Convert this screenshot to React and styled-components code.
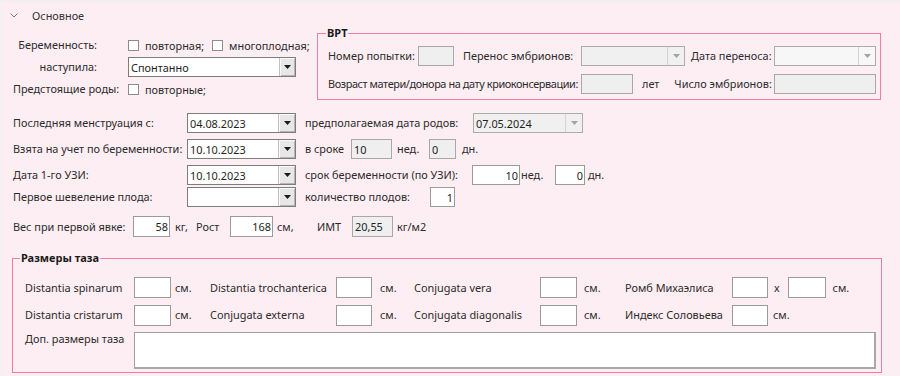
import React from "react";
import styled, { createGlobalStyle } from "styled-components";

const FONT = `"Noto Sans", "Open Sans", "DejaVu Sans", sans-serif`;

const GlobalStyle = createGlobalStyle`
  html, body { margin: 0; padding: 0; background: #fdeef3; }
  body { font-family: ${FONT}; font-size: 10.9px; color: #2b2b2b; }
  *, *::before, *::after { box-sizing: border-box; }
`;

const Page = styled.div`
  width: 900px;
  height: 376px;
  overflow: hidden;
  background: #fdeef3;
  border-top: 2px solid #f3eef0;
  border-left: 2px solid #f5f0f2;
`;

const Header = styled.div`
  height: 26px;
  display: flex;
  align-items: center;
  gap: 14px;
  padding-left: 8px;
  color: #333;
`;

const TopArea = styled.div`
  display: flex;
  align-items: flex-start;
`;

const PregnancyBlock = styled.div`
  width: 315px;
  padding: 6px 0 0 11px;
  display: flex;
  flex-direction: column;
`;

const Line = styled.div`
  display: flex;
  align-items: center;
  height: ${(p) => p.$h || 22}px;
  margin-top: ${(p) => p.$mt || 0}px;
`;

const Label = styled.span`
  flex: none;
  width: ${(p) => (p.$w ? `${p.$w}px` : "auto")};
  margin-left: ${(p) => p.$ml || 0}px;
  padding-left: ${(p) => p.$pl || 0}px;
  text-align: ${(p) => (p.$right ? "right" : "left")};
  align-self: ${(p) => (p.$top ? "start" : "auto")};
  letter-spacing: ${(p) => p.$ls || 0}px;
  white-space: nowrap;
  line-height: 14px;
`;

const CheckOption = styled.label`
  display: inline-flex;
  align-items: center;
  gap: 6px;
  margin-left: ${(p) => p.$ml || 0}px;
  white-space: nowrap;
`;

const CheckBox = styled.input.attrs({ type: "checkbox", readOnly: true })`
  appearance: none;
  margin: 0;
  width: 11px;
  height: 11px;
  flex: none;
  border: 1px solid #8c8c8c;
  background: #fff;
`;

const Dropdown = styled.div`
  flex: none;
  display: flex;
  width: ${(p) => p.$w}px;
  height: ${(p) => p.$h || 20}px;
  margin-left: ${(p) => p.$ml || 0}px;
  border: 1px solid ${(p) => (p.$disabled ? "#acacac" : "#7d7d7d")};
  background: ${(p) => (p.$disabled ? p.$bg || "#f0f0f0" : "#fff")};
`;

const DropValue = styled.span`
  flex: 1;
  display: flex;
  align-items: center;
  padding-left: 2px;
  color: #1f1f1f;
  white-space: nowrap;
  overflow: hidden;
`;

const DropButton = styled.span`
  flex: none;
  width: ${(p) => p.$w || 17}px;
  display: flex;
  align-items: center;
  justify-content: center;
  background: ${(p) => (p.$disabled ? "transparent" : "#e7e7e7")};
  border-left: 1px solid ${(p) => (p.$disabled ? "#d4d4d4" : "#c2c2c2")};
  box-shadow: ${(p) => (p.$disabled ? "none" : "inset 1px 1px 0 #fafafa, inset -1px -1px 0 #b5b5b5")};
`;

const Arrow = ({ color }) => (
  <svg width="7" height="4" viewBox="0 0 7 4">
    <path d="M0 0H7L3.5 4Z" fill={color} />
  </svg>
);

const Picker = ({ value, w = 109, h, ml, disabled, bg, btn }) => (
  <Dropdown $w={w} $h={h} $ml={ml} $disabled={disabled} $bg={bg}>
    <DropValue>{value}</DropValue>
    <DropButton $disabled={disabled} $w={btn}>
      <Arrow color={disabled ? "#a3a3a3" : "#1a1a1a"} />
    </DropButton>
  </Dropdown>
);

const TextBox = styled.input.attrs({ type: "text", readOnly: true })`
  flex: none;
  width: ${(p) => p.$w}px;
  height: ${(p) => p.$h || 20}px;
  margin: 0 0 0 ${(p) => p.$ml || 0}px;
  padding: 0 ${(p) => (p.$right ? 1 : 2)}px;
  border: 1px solid ${(p) => (p.$disabled ? "#a8a8a8" : "#9a9a9a")};
  background: ${(p) => (p.$disabled ? "#efefef" : "#fff")};
  font: inherit;
  color: #222;
  text-align: ${(p) => (p.$right ? "right" : "left")};
  outline: none;
`;

const Fieldset = styled.fieldset`
  margin: ${(p) => p.$margin || 0};
  padding: 0;
  min-width: 0;
  width: ${(p) => p.$w}px;
  border: 1px solid #f57ca7;
`;

const Legend = styled.legend`
  margin-left: ${(p) => p.$ml}px;
  padding: 0 1px;
  font-weight: 700;
  font-size: 11px;
  line-height: ${(p) => p.$lh}px;
  color: #1a1a1a;
`;

const ArtGrid = styled.div`
  display: grid;
  grid-template-columns: 90px 36px 127px 104px 89px 102px;
  grid-template-rows: 20px 20px;
  row-gap: 8px;
  align-items: center;
  padding: 8px 3px 5px 10px;
`;

const Cell = styled.div`
  display: flex;
  align-items: center;
  grid-column: ${(p) => p.$col || "auto"};
  padding-left: ${(p) => p.$pl || 0}px;
`;

const MainSection = styled.div`
  display: flex;
  flex-direction: column;
  padding: 13px 0 0 11px;
`;

const PelvisGrid = styled.div`
  display: grid;
  grid-template-columns: 109px 37px 39px 126px 36px 42px 126px 37px 48px 107px 36px 108px;
  grid-template-rows: 21px 21px 37px;
  row-gap: 6.5px;
  align-items: center;
  padding: 13px 4px 3px 12px;
`;

const Notes = styled.textarea.attrs({ readOnly: true })`
  grid-column: 2 / -1;
  height: 37px;
  margin: 0;
  resize: none;
  border: 1px solid #a0a0a0;
  border-right: 2px solid #a8a8a8;
  border-bottom: 2px solid #a8a8a8;
  background: #fff;
  font: inherit;
  outline: none;
`;

const Chevron = () => (
  <svg width="8" height="5" viewBox="0 0 8 5">
    <polyline points="0.5,0.5 4,4 7.5,0.5" fill="none" stroke="#777" strokeWidth="1" />
  </svg>
);

export default function App() {
  return (
    <>
      <GlobalStyle />
      <Page>
        <Header>
          <Chevron />
          <span>Основное</span>
        </Header>

        <TopArea>
          <PregnancyBlock>
            <Line>
              <Label $w={84} $right>Беременность:</Label>
              <CheckOption $ml={31}>
                <CheckBox />
                повторная;
              </CheckOption>
              <CheckOption $ml={8}>
                <CheckBox />
                многоплодная;
              </CheckOption>
            </Line>
            <Line>
              <Label $w={84} $right>наступила:</Label>
              <Picker value="Спонтанно" w={168} ml={31} btn={16} />
            </Line>
            <Line>
              <Label $w={115}>Предстоящие роды:</Label>
              <CheckOption>
                <CheckBox />
                повторные;
              </CheckOption>
            </Line>
          </PregnancyBlock>

          <Fieldset $w={564}>
            <Legend $ml={8} $lh={10}>ВРТ</Legend>
            <ArtGrid>
              <Label>Номер попытки:</Label>
              <TextBox $w={36} $disabled defaultValue="" />
              <Label $pl={9}>Перенос эмбрионов:</Label>
              <Picker w={104} disabled />
              <Label $pl={6}>Дата переноса:</Label>
              <Picker w={102} disabled bg="#f7f7f7" />

              <Cell $col="1 / 4">
                <Label $ls={-0.4}>Возраст матери/донора на дату криоконсервации:</Label>
              </Cell>
              <Cell $col="4 / 6">
                <TextBox $w={52} $disabled defaultValue="" />
                <Label $ml={9}>лет</Label>
                <Label $ml={15}>Число эмбрионов:</Label>
              </Cell>
              <TextBox $w={102} $disabled defaultValue="" />
            </ArtGrid>
          </Fieldset>
        </TopArea>

        <MainSection>
          <Line $h={20}>
            <Label $w={174}>Последняя менструация с:</Label>
            <Picker value="04.08.2023" />
            <Label $w={168} $ml={9}>предполагаемая дата родов:</Label>
            <Picker value="07.05.2024" w={110} disabled />
          </Line>
          <Line $h={20} $mt={6}>
            <Label $w={174}>Взята на учет по беременности:</Label>
            <Picker value="10.10.2023" />
            <Label $w={46} $ml={9}>в сроке</Label>
            <TextBox $w={41} $disabled defaultValue="10" />
            <Label $w={32} $ml={5}>нед.</Label>
            <TextBox $w={27} $disabled defaultValue="0" />
            <Label $ml={6}>дн.</Label>
          </Line>
          <Line $h={20} $mt={6}>
            <Label $w={174}>Дата 1-го УЗИ:</Label>
            <Picker value="10.10.2023" />
            <Label $w={167} $ml={9}>срок беременности (по УЗИ):</Label>
            <TextBox $w={48} $right defaultValue="10" />
            <Label $w={34} $ml={1}>нед.</Label>
            <TextBox $w={30} $right defaultValue="0" />
            <Label $ml={3}>дн.</Label>
          </Line>
          <Line $h={20} $mt={2}>
            <Label $w={174}>Первое шевеление плода:</Label>
            <Picker value="" />
            <Label $w={125} $ml={9}>количество плодов:</Label>
            <TextBox $w={25} $right defaultValue="1" />
          </Line>
          <Line $h={21} $mt={9}>
            <Label $w={120}>Вес при первой явке:</Label>
            <TextBox $w={37} $h={21} $right defaultValue="58" />
            <Label $w={21} $ml={5}>кг,</Label>
            <Label $w={34}>Рост</Label>
            <TextBox $w={43} $h={21} $right defaultValue="168" />
            <Label $w={40} $ml={4}>см,</Label>
            <Label $w={35}>ИМТ</Label>
            <TextBox $w={41} $h={21} $disabled defaultValue="20,55" />
            <Label $ml={4}>кг/м2</Label>
          </Line>
        </MainSection>

        <Fieldset $w={870} $margin="15px 0 0 10px">
          <Legend $ml={7} $lh={12}>Размеры таза</Legend>
          <PelvisGrid>
            <Label>Distantia spinarum</Label>
            <TextBox $w={37} $h={21} defaultValue="" />
            <Label $pl={4}>см.</Label>
            <Label>Distantia trochanterica</Label>
            <TextBox $w={36} $h={21} defaultValue="" />
            <Label $pl={8}>см.</Label>
            <Label>Conjugata vera</Label>
            <TextBox $w={37} $h={21} defaultValue="" />
            <Label $pl={7}>см.</Label>
            <Label>Ромб Михаэлиса</Label>
            <TextBox $w={36} $h={21} defaultValue="" />
            <Cell>
              <Label $ml={6}>х</Label>
              <TextBox $w={38} $h={21} $ml={8} defaultValue="" />
              <Label $ml={7}>см.</Label>
            </Cell>

            <Label>Distantia cristarum</Label>
            <TextBox $w={37} $h={21} defaultValue="" />
            <Label $pl={4}>см.</Label>
            <Label>Conjugata externa</Label>
            <TextBox $w={36} $h={21} defaultValue="" />
            <Label $pl={8}>см.</Label>
            <Label>Conjugata diagonalis</Label>
            <TextBox $w={37} $h={21} defaultValue="" />
            <Label $pl={7}>см.</Label>
            <Label>Индекс Соловьева</Label>
            <TextBox $w={36} $h={21} defaultValue="" />
            <Label $pl={5}>см.</Label>

            <Label $top>Доп. размеры таза</Label>
            <Notes defaultValue="" />
          </PelvisGrid>
        </Fieldset>
      </Page>
    </>
  );
}
